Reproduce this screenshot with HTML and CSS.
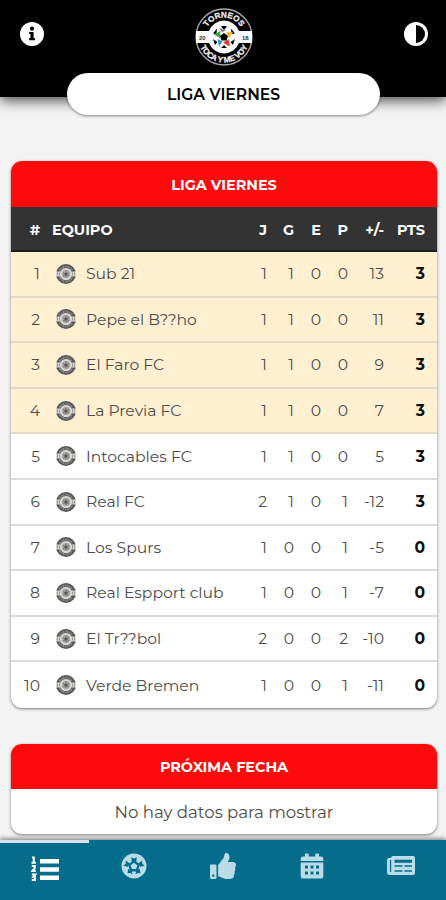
FILE: index.html
```html
<!DOCTYPE html>
<html lang="es">
<head>
<meta charset="utf-8">
<meta name="viewport" content="width=device-width">
<title>Liga Viernes</title>
<link rel="stylesheet" href="styles.css">
</head>
<body>
<svg class="defs" aria-hidden="true">
  <symbol id="badge" viewBox="0 0 40 40">
    <circle cx="20" cy="20" r="20" fill="#555"/>
    <path d="M7 13Q20-3 33 13M7 27Q20 43 33 27" fill="none" stroke="#8c8c8c" stroke-width="4" stroke-dasharray="3 1.5"/>
    <path d="M0 15h9a12 12 0 0 1 22 0h9v10h-9a12 12 0 0 1-22 0H0z" fill="#d8d5d0"/>
    <path d="M3 17v6M7 17v6M33 17v6M37 17v6" stroke="#999" stroke-width="2"/>
    <circle cx="20" cy="20" r="8" fill="#a5a3a0"/>
    <path d="M20 13v14M14 17l12 7M14 24l12-7" stroke="#777" stroke-width="2"/>
    <circle cx="20" cy="20" r="3" fill="#555"/>
  </symbol>
</svg>
<div class="app">
  <header class="top">
    <svg class="top-icon" viewBox="0 0 24 24"><circle cx="12" cy="12" r="12" fill="#fff"/><circle cx="12" cy="6.7" r="2.1"/><path d="M9.200 10h4.400v6h1.300v2.200H9.200V16h1.300v-3.800H9.200z"/></svg>
    <svg class="logo" viewBox="0 0 58 60">
      <defs>
        <path id="arcTop" d="M9.500 30a19.500 19.500 0 0 1 39 0"/>
        <path id="arcBottom" d="M3.500 30a25.500 25.500 0 0 0 51 0"/>
      </defs>
      <circle cx="29" cy="30" r="28" fill="#000" stroke="#aaa" stroke-width="1.300"/>
      <path d="M1 24h13a16 16 0 0 1 30 0h13v12H44a16 16 0 0 1-30 0H1z" fill="#fff"/>
      <text class="logo-text" text-anchor="middle"><textPath href="#arcTop" startOffset="50%" textLength="40">TORNEOS</textPath></text>
      <text class="logo-text" text-anchor="middle"><textPath href="#arcBottom" startOffset="50%" textLength="60">TOCA Y ME VOY</textPath></text>
      <text class="logo-year" x="4" y="32.500">20</text><text class="logo-year" x="47" y="32.500">18</text>
      <g transform="translate(29 30)">
        <path d="M-3-10.500Q0-12 3-10.500L0-7zM7-8.500l4 5-3.500.5zM-7-8.500l-4 5 3.500.5zM11 2l-2 6-2.500-3zM-11 2l2 6 2.500-3zM-3 11l3-3 3 3z"/>
        <path d="M-2-4.500l-3-4.500 7 2z" fill="#888"/>
        <path d="M2-4.500l7-.5-4 6z" fill="#f5b51b"/>
        <path d="M4.500 2.500L6 9.500l-7-4z" fill="#e8302c"/>
        <path d="M-1.500 4.500L-5 9.500-6.500 2z" fill="#2497d3"/>
        <path d="M-4 1l-6-3.500 6.500-3.500z" fill="#3ba345"/>
        <path d="M0-4l4 3-1.500 4.500h-5L-4-1z"/>
      </g>
    </svg>
    <svg class="top-icon" viewBox="0 0 24 24"><circle cx="12" cy="12" r="12" fill="#fff"/><path d="M12 3a9 9 0 0 1 0 18z"/></svg>
    <div class="pill"><span>LIGA VIERNES</span></div>
  </header>

  <main class="content">
    <section class="card">
      <h2 class="card-title">LIGA VIERNES</h2>
      <div class="row head"><span>#</span><span class="team">EQUIPO</span><span>J</span><span>G</span><span>E</span><span>P</span><span class="diff">+/-</span><span class="pts">PTS</span></div>
      <div class="row hot"><span>1</span><span class="team"><svg><use href="#badge"/></svg>Sub 21</span><span>1</span><span>1</span><span>0</span><span>0</span><span>13</span><b>3</b></div>
      <div class="row hot"><span>2</span><span class="team"><svg><use href="#badge"/></svg>Pepe el B??ho</span><span>1</span><span>1</span><span>0</span><span>0</span><span>11</span><b>3</b></div>
      <div class="row hot"><span>3</span><span class="team"><svg><use href="#badge"/></svg>El Faro FC</span><span>1</span><span>1</span><span>0</span><span>0</span><span>9</span><b>3</b></div>
      <div class="row hot"><span>4</span><span class="team"><svg><use href="#badge"/></svg>La Previa FC</span><span>1</span><span>1</span><span>0</span><span>0</span><span>7</span><b>3</b></div>
      <div class="row"><span>5</span><span class="team"><svg><use href="#badge"/></svg>Intocables FC</span><span>1</span><span>1</span><span>0</span><span>0</span><span>5</span><b>3</b></div>
      <div class="row"><span>6</span><span class="team"><svg><use href="#badge"/></svg>Real FC</span><span>2</span><span>1</span><span>0</span><span>1</span><span>-12</span><b>3</b></div>
      <div class="row"><span>7</span><span class="team"><svg><use href="#badge"/></svg>Los Spurs</span><span>1</span><span>0</span><span>0</span><span>1</span><span>-5</span><b>0</b></div>
      <div class="row"><span>8</span><span class="team"><svg><use href="#badge"/></svg>Real Espport club</span><span>1</span><span>0</span><span>0</span><span>1</span><span>-7</span><b>0</b></div>
      <div class="row"><span>9</span><span class="team"><svg><use href="#badge"/></svg>El Tr??bol</span><span>2</span><span>0</span><span>0</span><span>2</span><span>-10</span><b>0</b></div>
      <div class="row"><span>10</span><span class="team"><svg><use href="#badge"/></svg>Verde Bremen</span><span>1</span><span>0</span><span>0</span><span>1</span><span>-11</span><b>0</b></div>
    </section>
    <section class="card next">
      <h2 class="card-title">PRÓXIMA FECHA</h2>
      <p class="empty">No hay datos para mostrar</p>
    </section>
  </main>

  <nav class="tabs">
    <a class="tab active"><svg width="28" height="26" viewBox="0 0 28 26"><path d="M9 3h19v4.500H9zM9 11.200h19v4.500H9zM9 19.500h19V24H9z"/><path d="M1 1.600h1.800v5M.5 6.800h4.300M.8 10h3v2.200L1.300 15h3.500M.8 18.500h3.500l-2 2.500h1.700v3H.8" fill="none" stroke="#fff" stroke-width="2"/></svg></a>
    <a class="tab"><svg width="26" height="26" viewBox="0 0 26 26"><circle cx="13" cy="13" r="12.500"/><g fill="#056c8b"><path d="M13 7l6 4.300-2.300 7.100H9.300L7 11.300z"/><path d="M10.200 4.200L13 5.600l2.800-1.400-.6 4.600h-4.400zM21.200 7.600l.1 3.100 2.400 2-4.600 1-1.500-3.500zM4.800 7.600l-.1 3.100-2.400 2 4.600 1 1.500-3.500zM19.500 20.200l-3-.2-2 1.700.8-4.500 3.500-1.200zM6.500 20.200l3-.2 2 1.700-.8-4.500-3.500-1.200z"/></g><path d="M13 9.800l3.400 2.400-1.300 3.900h-4.200l-1.300-3.900z"/></svg></a>
    <a class="tab"><svg width="26" height="26" viewBox="0 0 512 512"><path d="M104 224H24c-13.255 0-24 10.745-24 24v240c0 13.255 10.745 24 24 24h80c13.255 0 24-10.745 24-24V248c0-13.255-10.745-24-24-24zM64 472c-13.255 0-24-10.745-24-24s10.745-24 24-24 24 10.745 24 24-10.745 24-24 24zM384 81.452c0 42.416-25.970 66.208-33.277 94.548h101.723c33.397 0 59.397 27.746 59.553 58.098.084 17.938-7.546 37.249-19.439 49.197l-.110.110c9.836 23.337 8.237 56.037-9.308 79.469 8.681 25.895-.069 57.704-16.382 74.757 4.298 17.598 2.244 32.575-6.148 44.632C440.202 511.587 389.616 512 346.839 512l-2.845-.001c-48.287-.017-87.806-17.598-119.560-31.725-15.957-7.099-36.821-15.887-52.651-16.178-6.540-.120-11.783-5.457-11.783-11.998v-213.770c0-3.200 1.282-6.271 3.558-8.521 39.614-39.144 56.648-80.587 89.117-113.111 14.804-14.832 20.188-37.236 25.393-58.902C282.515 39.293 291.817 0 312 0c24 0 72 8 72 81.452z"/></svg></a>
    <a class="tab"><svg width="24" height="26" viewBox="0 0 24 26"><path fill-rule="evenodd" d="M3 3.500h2V1.200Q5 .4 5.800.4h2Q8.600.4 8.600 1.200v2.300h6.800V1.200q0-.8.8-.8h2q.8 0 .8.800v2.300h2q2.300 0 2.300 2.300V8H.7V5.800Q.7 3.500 3 3.500zM.7 9.500h22.600v14q0 2-2 2H2.700q-2 0-2-2zM5 12.500v3h3v-3zM10.500 12.500v3h3v-3zM16 12.500v3h3v-3zM5 18.500v3h3v-3zM10.500 18.500v3h3v-3zM16 18.500v3h3v-3z"/></svg></a>
    <a class="tab"><svg width="28" height="26" viewBox="0 0 28 26"><path fill-rule="evenodd" d="M6 3h20q2 0 2 2v15q0 2-2 2H3q-3 0-3-3V7q0-2 2-2h2q0-2 2-2zM4.200 7H2.900v11.500q.7 1.200 1.300 0zM7.500 6.700v3H25v-3zM7.500 12.300v1.400h8v-1.400zM17.500 12.300v1.400H25v-1.400zM7.500 17.300v1.500h8v-1.500zM17.500 17.300v1.500H25v-1.500z"/></svg></a>
  </nav>
</div>
</body>
</html>
```
FILE: styles.css
```css
* { box-sizing: border-box; }
body { margin: 0; font-family: Montserrat, Inter, "Liberation Sans", sans-serif; background: #f3f3f3; color: #4c4c4c; }
.defs { position: absolute; width: 0; height: 0; }
.app { height: 900px; display: flex; flex-direction: column; overflow: hidden; }
.top { height: 97px; flex: none; background: #000; position: relative; display: flex; justify-content: space-between; padding: 0 18px 0 20px; box-shadow: 0 3px 13px rgba(0,0,0,.75); }
.top-icon { width: 24px; height: 24px; margin-top: 22px; }
.logo { width: 58px; height: 60px; margin-top: 7px; }
.logo-text { font: bold 8px "Liberation Sans", sans-serif; fill: #eee; stroke: #eee; stroke-width: .3px; }
.logo-year { font: bold 6px "Liberation Sans", sans-serif; fill: #333; }
.pill { position: absolute; left: 67px; top: 73px; width: 313px; height: 42px; border-radius: 21px; background: #fff; display: flex; align-items: center; justify-content: center; font-size: 15.600px; font-weight: 600; color: #000; box-shadow: 0 1px 3px rgba(0,0,0,.45); }
.pill span { padding-top: 1px; }
.content { flex: 1; padding: 64px 9px 0 11px; }
.card { height: 547px; background: #fff; border-radius: 11px; overflow: hidden; box-shadow: 0 1px 3px rgba(0,0,0,.5); }
.card-title { height: 46px; margin: 0; background: #fd0b0b; color: #fff; text-align: center; font-size: 14.400px; font-weight: 700; line-height: 48px; }
.row { height: 45.600px; display: grid; grid-template-columns: 29px 201px 26px 27px 27px 27px 36px 41px; align-items: center; text-align: right; font-size: 15.600px; font-weight: 400; border-bottom: 2px solid #dcdcdc; }
.row:last-child { border-bottom: 0; }
.head { height: 45px; padding-top: 2px; background: #333; color: #fff; font-size: 14.400px; font-weight: 700; border-bottom: 2px solid #1c1c22; }
.hot { background: #fff0d2; border-color: #e2d9cb; }
.team { display: flex; align-items: center; text-align: left; padding-left: 16px; }
.team svg { width: 20px; height: 20px; margin-right: 10px; }
.head .team { padding-left: 12px; }
.row b { font-weight: 700; color: #111; }
.next { height: 90px; margin-top: 36px; }
.next .card-title { height: 45px; line-height: 46px; }
.empty { margin: 0; text-align: center; line-height: 46px; font-size: 16.600px; font-weight: 400; }
.tabs { height: 60px; flex: none; display: grid; grid-template-columns: repeat(5, 1fr); background: #056c8b; position: relative; box-shadow: 0 -2px 4px rgba(0,0,0,.4); }
.tab { display: flex; justify-content: center; padding-top: 13px; border-top: 3px solid transparent; fill: #b9dce8; }
.tab svg { margin-top: -3px; }
.active { fill: #fff; border-color: #d5e4ee; }
.active svg { margin-top: 0; }
```
